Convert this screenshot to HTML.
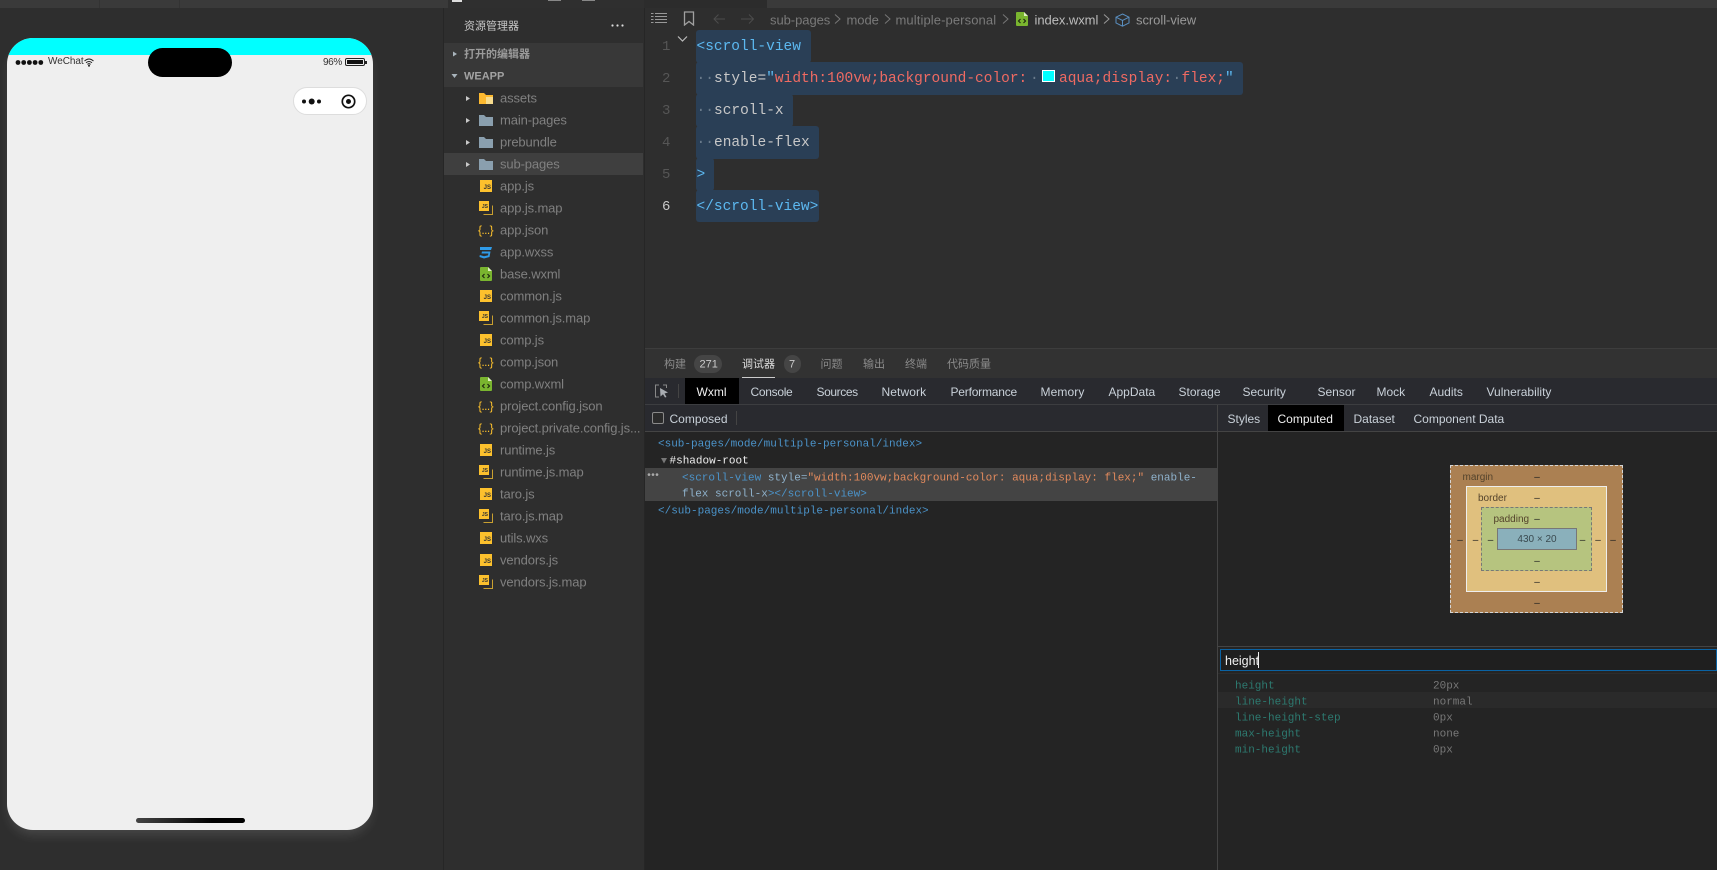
<!DOCTYPE html>
<html lang="zh"><head><meta charset="utf-8"><title>WeChat DevTools</title>
<style>
*{box-sizing:border-box}
html,body{margin:0;padding:0;width:1717px;height:870px;overflow:hidden;background:#2e2e2e;font-family:"Liberation Sans","Noto Sans CJK SC",sans-serif}
.a{position:absolute}
.t{position:absolute;white-space:pre;transform:translateY(-50%);line-height:1}
.m{font-family:"Liberation Mono","DejaVu Sans Mono",monospace}
.f{font-size:13px;letter-spacing:-.12px;color:#808080}
.cd{font-size:14.5px;color:#c8c8c8}
.ln{font-size:14px;color:#565656}
.tab{font-size:12px;color:#c9d1d9}
.cn{font-size:11px;color:#8b8b8b}
.bc{font-size:13px;letter-spacing:-.05px;color:#7a7a7a}
.tr{font-size:11px;color:#4b93c9}
.pn{font-size:11px;color:#2d7a70}
.pv{font-size:11px;color:#787878}
.sel{position:absolute;background:#2a3f56;border-radius:3px}
.js{position:absolute;width:12px;height:12px;background:#fcc12d;color:#333;font:bold 6px/1 "Liberation Sans",sans-serif;text-align:right;padding:5px 1px 0 0}
.mp{position:absolute;width:14px;height:14px}
.mp i{position:absolute;left:0;top:0;width:10px;height:10px;background:#fcc12d;color:#333;font:bold 5px/1 "Liberation Sans",sans-serif;text-align:right;padding:4px 1px 0 0}
.mp b{position:absolute;left:4px;top:4px;width:10px;height:10px;border:1px solid #c9a030;border-left-color:transparent;border-top-color:transparent}
.br{position:absolute;white-space:pre;transform:translateY(-50%);line-height:1;left:478px;font:12px/1 "Liberation Sans",sans-serif;letter-spacing:-.6px;color:#fcc12d}
.b{position:absolute;font-size:10px;color:#222;transform:translate(-50%,-50%);line-height:1}
.bx{font-size:10px;color:#54432c}
</style></head><body>

<!-- top strip -->
<div class="a" style="left:0;top:0;width:1717px;height:8px;background:#3a3a3a"></div>
<div class="a" style="left:99px;top:0;width:1px;height:8px;background:#333"></div>
<div class="a" style="left:179px;top:0;width:1px;height:8px;background:#333"></div>
<div class="a" style="left:448px;top:0;width:196px;height:8px;background:#2f2f2f"></div>
<div class="a" style="left:452px;top:0;width:10px;height:2px;background:#ddd"></div>
<div class="a" style="left:548px;top:0;width:13px;height:1px;background:#888"></div>
<div class="a" style="left:582px;top:0;width:13px;height:1px;background:#888"></div>
<div class="a" style="left:644px;top:0;width:123px;height:8px;background:#2c2c2c"></div>
<div class="a" style="left:443px;top:8px;width:1px;height:862px;background:#262626"></div>
<div class="a" style="left:644px;top:8px;width:1px;height:862px;background:#262626"></div>

<!-- phone -->
<div class="a" style="left:7px;top:38px;width:366px;height:792px;border-radius:26px;background:#efefef;overflow:hidden;box-shadow:0 7px 12px -3px rgba(255,255,255,.14)">
  <div class="a" style="left:0;top:0;width:366px;height:17px;background:#0ff"></div>
</div>
<div class="a" style="left:148px;top:48px;width:84px;height:29px;border-radius:15px;background:#000"></div>
<svg class="a" style="left:15px;top:58px" width="32" height="9"><g fill="#111"><circle cx="3" cy="4.5" r="2.4"/><circle cx="8.7" cy="4.5" r="2.4"/><circle cx="14.4" cy="4.5" r="2.4"/><circle cx="20.1" cy="4.5" r="2.4"/><circle cx="25.8" cy="4.5" r="2.4"/></g></svg>
<span class="t" style="left:48px;top:62px;font-size:10px;letter-spacing:-.05px;color:#333">WeChat</span>
<svg class="a" style="left:84px;top:58px" width="10" height="9" viewBox="0 0 10 9"><path d="M.5 3Q5-1 9.5 3M2 4.8Q5 2.2 8 4.8M3.4 6.4Q5 5 6.6 6.4" fill="none" stroke="#222" stroke-width="1"/><circle cx="5" cy="7.8" r="1" fill="#222"/></svg>
<span class="t" style="left:323px;top:63px;font-size:10px;letter-spacing:-.4px;color:#333">96%</span>
<div class="a" style="left:345px;top:58px;width:20px;height:8px;border:1px solid #222;border-radius:2px;padding:1px"><div style="width:100%;height:100%;background:#111"></div></div>
<div class="a" style="left:365px;top:60.5px;width:1.5px;height:3px;background:#222"></div>
<div class="a" style="left:293px;top:87px;width:74px;height:28px;border-radius:14px;background:#fff;border:1px solid #ddd"></div>
<svg class="a" style="left:300px;top:92px" width="60" height="18"><g fill="#111"><circle cx="4" cy="9.5" r="2"/><circle cx="11.7" cy="9.5" r="3"/><circle cx="19" cy="9.5" r="2"/></g><circle cx="48.5" cy="9.5" r="6.2" fill="none" stroke="#111" stroke-width="1.7"/><circle cx="48.5" cy="9.5" r="2.5" fill="#111"/></svg>
<div class="a" style="left:136px;top:818px;width:109px;height:5px;border-radius:3px;background:linear-gradient(90deg,#444,#000 70%)"></div>

<!-- sidebar -->
<span class="t" style="left:464px;top:27px;font-size:11px;color:#c8c8c8">资源管理器</span>
<svg class="a" style="left:610px;top:23px" width="16" height="6"><g fill="#ddd"><circle cx="2.5" cy="2.5" r="1.1"/><circle cx="7.5" cy="2.5" r="1.1"/><circle cx="12.5" cy="2.5" r="1.1"/></g></svg>
<div class="a" style="left:444px;top:43px;width:199px;height:44px;background:#383838"></div>
<svg class="a" style="left:451px;top:50px" width="8" height="8"><path d="M2 1.5L6 4 2 6.5z" fill="#a9b4bc"/></svg>
<span class="t" style="left:464px;top:55px;font-size:11px;font-weight:700;color:#9b9b9b">打开的编辑器</span>
<svg class="a" style="left:450px;top:72px" width="9" height="8"><path d="M1.5 2H7.5L4.5 6z" fill="#a9b4bc"/></svg>
<span class="t" style="left:464px;top:77px;font-size:11px;font-weight:700;color:#a3a3a3">WEAPP</span>
<div class="a" style="left:444px;top:153px;width:199px;height:22px;background:#3f3f3f"></div>

<svg class="a" style="left:464px;top:92px" width="32" height="80" viewBox="0 0 32 80">
<g fill="#c9c9c9"><path d="M2 4L6 6.5 2 9z"/><path d="M2 26L6 28.5 2 31z"/><path d="M2 48L6 50.5 2 53z"/><path d="M2 70L6 72.5 2 75z"/></g>
<path d="M15 1h5l2 2h7v9H15z" fill="#fdb92f"/><path d="M22 5h7v7h-7z" fill="#f7dc8e"/>
<path d="M15 23h5l2 2h7v9H15z" fill="#8a9fae"/>
<path d="M15 45h5l2 2h7v9H15z" fill="#8a9fae"/>
<path d="M15 67h5l2 2h7v9H15z" fill="#8a9fae"/>
</svg>
<span class="t f" style="left:500px;top:98px">assets</span>
<span class="t f" style="left:500px;top:120px">main-pages</span>
<span class="t f" style="left:500px;top:142px">prebundle</span>
<span class="t f" style="left:500px;top:164px">sub-pages</span>

<span class="js" style="left:480px;top:180px">JS</span><span class="t f" style="left:500px;top:186px">app.js</span>
<span class="mp" style="left:479px;top:201px"><b></b><i>JS</i></span><span class="t f" style="left:500px;top:208px">app.js.map</span>
<span class="br" style="top:230px">{...}</span><span class="t f" style="left:500px;top:230px">app.json</span>
<svg class="a" style="left:479px;top:246px" width="14" height="13" viewBox="0 0 14 13"><path d="M1 1H13L12 4H1zM3 5.5H11.5L10.5 11 5 12.5 .5 11 .8 9 5 10.2 9 9.4 9.4 7.5H2.5z" fill="#2f9be8"/></svg><span class="t f" style="left:500px;top:252px">app.wxss</span>
<svg class="a" style="left:480px;top:267px" width="12" height="14" viewBox="0 0 12 14"><path d="M1 0H8L12 4V13a1 1 0 0 1-1 1H1a1 1 0 0 1-1-1V1a1 1 0 0 1 1-1z" fill="#7ab52f"/><path d="M8 0V4H12z" fill="#dff0c0"/><path d="M4.5 7L2.5 9 4.5 11M7.5 7L9.5 9 7.5 11" fill="none" stroke="#1f2b10" stroke-width="1.2"/></svg><span class="t f" style="left:500px;top:274px">base.wxml</span>
<span class="js" style="left:480px;top:290px">JS</span><span class="t f" style="left:500px;top:296px">common.js</span>
<span class="mp" style="left:479px;top:311px"><b></b><i>JS</i></span><span class="t f" style="left:500px;top:318px">common.js.map</span>
<span class="js" style="left:480px;top:334px">JS</span><span class="t f" style="left:500px;top:340px">comp.js</span>
<span class="br" style="top:362px">{...}</span><span class="t f" style="left:500px;top:362px">comp.json</span>
<svg class="a" style="left:480px;top:377px" width="12" height="14" viewBox="0 0 12 14"><path d="M1 0H8L12 4V13a1 1 0 0 1-1 1H1a1 1 0 0 1-1-1V1a1 1 0 0 1 1-1z" fill="#7ab52f"/><path d="M8 0V4H12z" fill="#dff0c0"/><path d="M4.5 7L2.5 9 4.5 11M7.5 7L9.5 9 7.5 11" fill="none" stroke="#1f2b10" stroke-width="1.2"/></svg><span class="t f" style="left:500px;top:384px">comp.wxml</span>
<span class="br" style="top:406px">{...}</span><span class="t f" style="left:500px;top:406px">project.config.json</span>
<span class="br" style="top:428px">{...}</span><span class="t f" style="left:500px;top:428px">project.private.config.js...</span>
<span class="js" style="left:480px;top:444px">JS</span><span class="t f" style="left:500px;top:450px">runtime.js</span>
<span class="mp" style="left:479px;top:465px"><b></b><i>JS</i></span><span class="t f" style="left:500px;top:472px">runtime.js.map</span>
<span class="js" style="left:480px;top:488px">JS</span><span class="t f" style="left:500px;top:494px">taro.js</span>
<span class="mp" style="left:479px;top:509px"><b></b><i>JS</i></span><span class="t f" style="left:500px;top:516px">taro.js.map</span>
<span class="js" style="left:480px;top:532px">JS</span><span class="t f" style="left:500px;top:538px">utils.wxs</span>
<span class="js" style="left:480px;top:554px">JS</span><span class="t f" style="left:500px;top:560px">vendors.js</span>
<span class="mp" style="left:479px;top:575px"><b></b><i>JS</i></span><span class="t f" style="left:500px;top:582px">vendors.js.map</span>

<!-- breadcrumb -->
<svg class="a" style="left:651px;top:12px" width="16" height="13"><g stroke="#999" stroke-width="1"><path d="M4 1.5H16M4 4.5H16M4 7.5H16M4 10.5H16"/><path d="M0 1.5H2.5M0 4.5H2.5M0 7.5H2.5M0 10.5H2.5"/></g></svg>
<svg class="a" style="left:683px;top:11px" width="12" height="15"><path d="M1.5 1H10.5V14L6 10.5 1.5 14z" fill="none" stroke="#a0a0a0" stroke-width="1.3"/></svg>
<svg class="a" style="left:712px;top:13px" width="44" height="12"><path d="M13 6H2M6.5 1.5L2 6l4.5 4.5M29 6H41M37 1.5L41.5 6l-4.5 4.5" fill="none" stroke="#4c4c4c" stroke-width="1"/></svg>
<span class="t bc" style="left:770px;top:20px">sub-pages</span>
<svg class="a" style="left:834px;top:13px" width="8" height="12"><path d="M1 1.5L6 6 1 10.5" fill="none" stroke="#777" stroke-width="1"/></svg>
<span class="t bc" style="left:846.5px;top:20px">mode</span>
<svg class="a" style="left:884px;top:13px" width="8" height="12"><path d="M1 1.5L6 6 1 10.5" fill="none" stroke="#777" stroke-width="1"/></svg>
<span class="t bc" style="left:895.5px;top:20px;letter-spacing:.1px">multiple-personal</span>
<svg class="a" style="left:1002px;top:13px" width="8" height="12"><path d="M1 1.5L6 6 1 10.5" fill="none" stroke="#777" stroke-width="1"/></svg>
<svg class="a" style="left:1015.5px;top:12px" width="12" height="14" viewBox="0 0 12 14"><path d="M1 0H8L12 4V13a1 1 0 0 1-1 1H1a1 1 0 0 1-1-1V1a1 1 0 0 1 1-1z" fill="#7ab52f"/><path d="M8 0V4H12z" fill="#dff0c0"/><path d="M4.5 7L2.5 9 4.5 11M7.5 7L9.5 9 7.5 11" fill="none" stroke="#1f2b10" stroke-width="1.2"/></svg>
<span class="t bc" style="left:1034.5px;top:20px;color:#bdbdbd">index.wxml</span>
<svg class="a" style="left:1103px;top:13px" width="8" height="12"><path d="M1 1.5L6 6 1 10.5" fill="none" stroke="#999" stroke-width="1"/></svg>
<svg class="a" style="left:1115px;top:12.5px" width="15" height="14" viewBox="0 0 15 14"><path d="M7.5 1L14 4.2V10L7.5 13.2 1 10V4.2zM1 4.2L7.5 7.5 14 4.2M7.5 7.5V13.2" fill="none" stroke="#5a8fc0" stroke-width="1"/></svg>
<span class="t bc" style="left:1136px;top:20px;color:#999">scroll-view</span>

<!-- editor -->
<svg class="a" style="left:677px;top:35px" width="12" height="8"><path d="M1 1.5L5.5 6 10 1.5" fill="none" stroke="#bbb" stroke-width="1.2"/></svg>
<div class="sel" style="left:696px;top:30px;width:115px;height:33px"></div>
<div class="sel" style="left:696px;top:62px;width:547px;height:33px"></div>
<div class="sel" style="left:696px;top:94px;width:97px;height:33px"></div>
<div class="sel" style="left:696px;top:126px;width:123px;height:33px"></div>
<div class="sel" style="left:696px;top:158px;width:18px;height:33px"></div>
<div class="sel" style="left:696px;top:190px;width:123px;height:32px"></div>

<span class="t m ln" style="left:662px;top:47px">1</span>
<span class="t m ln" style="left:662px;top:79px">2</span>
<span class="t m ln" style="left:662px;top:111px">3</span>
<span class="t m ln" style="left:662px;top:143px">4</span>
<span class="t m ln" style="left:662px;top:175px">5</span>
<span class="t m ln" style="left:662px;top:207px;color:#c9c9c9">6</span>

<span class="t m cd" style="left:696.5px;top:47px;color:#5cb8f0">&lt;scroll-view</span>
<span class="t m cd" style="left:696.5px;top:79px;color:#6a7b8c">··</span>
<span class="t m cd" style="left:714px;top:79px">style=<span style="color:#5cb8f0">"</span><span style="color:#ef6a62">width:100vw;background-color:</span></span>
<span class="t m cd" style="left:1030px;top:79px;color:#6a7b8c">·</span>
<div class="a" style="left:1042px;top:70px;width:13px;height:12px;background:#0ff;border:1px solid #fff"></div>
<span class="t m cd" style="left:1059px;top:79px;color:#ef6a62">aqua;display:</span>
<span class="t m cd" style="left:1172.5px;top:79px;color:#6a7b8c">·</span>
<span class="t m cd" style="left:1181.5px;top:79px;color:#ef6a62">flex;<span style="color:#5cb8f0">"</span></span>
<span class="t m cd" style="left:696.5px;top:111px;color:#6a7b8c">··</span>
<span class="t m cd" style="left:714px;top:111px">scroll-x</span>
<span class="t m cd" style="left:696.5px;top:143px;color:#6a7b8c">··</span>
<span class="t m cd" style="left:714px;top:143px">enable-flex</span>
<span class="t m cd" style="left:696.5px;top:175px;color:#5cb8f0">&gt;</span>
<span class="t m cd" style="left:696.5px;top:207px;color:#5cb8f0">&lt;/scroll-view&gt;</span>

<!-- bottom tabs -->
<div class="a" style="left:645px;top:348px;width:1072px;height:30px;background:#323232;border-top:1px solid #3d3d3d"></div>
<div class="a" style="left:645px;top:378px;width:1072px;height:54px;background:#292a2f"></div>
<div class="a" style="left:645px;top:404px;width:1072px;height:1px;background:#3c3d40"></div>
<div class="a" style="left:645px;top:431px;width:1072px;height:1px;background:#444"></div>
<div class="a" style="left:645px;top:432px;width:1072px;height:438px;background:#242424"></div>

<span class="t cn" style="left:664px;top:364.5px">构建</span>
<div class="a" style="left:694px;top:355px;width:28px;height:18px;border-radius:9px;background:#454545"></div>
<span class="t" style="left:699.5px;top:364.5px;font-size:11px;color:#ccc">271</span>
<span class="t cn" style="left:742px;top:364.5px;color:#ddd">调试器</span>
<div class="a" style="left:742px;top:377px;width:33px;height:1px;background:#ccc"></div>
<div class="a" style="left:783.5px;top:355px;width:17px;height:18px;border-radius:8.5px;background:#454545"></div>
<span class="t" style="left:789px;top:364.5px;font-size:11px;color:#ccc">7</span>
<span class="t cn" style="left:820.5px;top:364.5px">问题</span>
<span class="t cn" style="left:863px;top:364.5px">输出</span>
<span class="t cn" style="left:905px;top:364.5px">终端</span>
<span class="t cn" style="left:947px;top:364.5px">代码质量</span>

<svg class="a" style="left:654px;top:384px" width="15" height="14"><path d="M5 1H1.5V13H5M9 1H12.5V4" fill="none" stroke="#888" stroke-width="1"/><path d="M6 4L14 8.5 10.5 9.5 12.5 13 11 13.5 9 10.2 6.5 12.5z" fill="#a9adb2"/></svg>
<div class="a" style="left:678px;top:384px;width:1px;height:14px;background:#444"></div>
<div class="a" style="left:685px;top:378px;width:54px;height:26px;background:#000"></div>
<span class="t tab" style="left:696.5px;top:392px;color:#f0f0f0">Wxml</span>
<span class="t tab" style="left:750.5px;top:392px;letter-spacing:-.3px">Console</span>
<span class="t tab" style="left:816.5px;top:392px;letter-spacing:-.4px">Sources</span>
<span class="t tab" style="left:881.5px;top:392px;letter-spacing:.1px">Network</span>
<span class="t tab" style="left:950.5px;top:392px;letter-spacing:-.2px">Performance</span>
<span class="t tab" style="left:1040.5px;top:392px;letter-spacing:.1px">Memory</span>
<span class="t tab" style="left:1108.5px;top:392px">AppData</span>
<span class="t tab" style="left:1178.5px;top:392px">Storage</span>
<span class="t tab" style="left:1242.5px;top:392px">Security</span>
<span class="t tab" style="left:1317.5px;top:392px">Sensor</span>
<span class="t tab" style="left:1376.5px;top:392px">Mock</span>
<span class="t tab" style="left:1429.5px;top:392px">Audits</span>
<span class="t tab" style="left:1486.5px;top:392px">Vulnerability</span>

<div class="a" style="left:652px;top:412px;width:12px;height:12px;border:1px solid #8a8a8a;border-radius:2px;background:#2b2b2b"></div>
<span class="t tab" style="left:669.5px;top:419px">Composed</span>
<div class="a" style="left:736px;top:411px;width:1px;height:14px;background:#444"></div>

<div class="a" style="left:1217px;top:405px;width:1px;height:465px;background:#444"></div>
<span class="t tab" style="left:1227.5px;top:419px">Styles</span>
<div class="a" style="left:1268px;top:405px;width:76px;height:26px;background:#000"></div>
<span class="t tab" style="left:1277.5px;top:419px;color:#f0f0f0">Computed</span>
<span class="t tab" style="left:1353.5px;top:419px">Dataset</span>
<span class="t tab" style="left:1413.5px;top:419px">Component Data</span>

<!-- wxml tree -->
<div class="a" style="left:645px;top:468px;width:572px;height:33px;background:#444"></div>
<span class="t m tr" style="left:658px;top:444.5px">&lt;sub-pages/mode/multiple-personal/index&gt;</span>
<svg class="a" style="left:660px;top:457px" width="8" height="8"><path d="M1 1H7L4 6.5z" fill="#777"/></svg>
<span class="t m tr" style="left:669.5px;top:461.5px;color:#eee">#shadow-root</span>
<span class="t m" style="left:646px;top:476.5px;font-size:10px;letter-spacing:-2px;color:#aaa">•••</span>
<span class="t m tr" style="left:682px;top:478.5px;color:#4b93c9">&lt;scroll-view <span style="color:#8fb2cc">style=</span><span style="color:#e28a5d">"width:100vw;background-color: aqua;display: flex;"</span> <span style="color:#8fb2cc">enable-</span></span>
<span class="t m tr" style="left:682px;top:494.5px;color:#4b93c9"><span style="color:#8fb2cc">flex scroll-x</span>&gt;&lt;/scroll-view&gt;</span>
<span class="t m tr" style="left:658px;top:512px">&lt;/sub-pages/mode/multiple-personal/index&gt;</span>

<!-- box model -->
<div class="a" style="left:1450px;top:465px;width:173px;height:148px;background:#ab8052;border:1px dashed #d5d5d5"></div>
<div class="a" style="left:1466px;top:486px;width:141px;height:106px;background:#e0c07e;border:1px solid #eee"></div>
<div class="a" style="left:1481px;top:507px;width:111px;height:64px;background:#b6c47f;border:1px dashed #777"></div>
<div class="a" style="left:1497px;top:528px;width:80px;height:22px;background:#8ab0bb;border:1px solid #777"></div>
<span class="t bx" style="left:1462.5px;top:478px">margin</span>
<span class="t bx" style="left:1478px;top:499px">border</span>
<span class="t bx" style="left:1493.5px;top:520px">padding</span>
<span class="b" style="left:1537px;top:478px">–</span>
<span class="b" style="left:1537px;top:499px">–</span>
<span class="b" style="left:1537px;top:520px">–</span>
<span class="b" style="left:1537px;top:540px;color:#3a4a50">430 × 20</span>
<span class="b" style="left:1537px;top:562px">–</span>
<span class="b" style="left:1537px;top:583px">–</span>
<span class="b" style="left:1537px;top:604px">–</span>
<span class="b" style="left:1460px;top:541px">–</span>
<span class="b" style="left:1475.5px;top:541px">–</span>
<span class="b" style="left:1490.5px;top:541px">–</span>
<span class="b" style="left:1582.5px;top:541px">–</span>
<span class="b" style="left:1598px;top:541px">–</span>
<span class="b" style="left:1613px;top:541px">–</span>

<!-- computed filter -->
<div class="a" style="left:1218px;top:646px;width:499px;height:1px;background:#444"></div>
<div class="a" style="left:1220px;top:649px;width:497px;height:22px;border:1px solid #0a62a3;background:#1f1f1f"></div>
<span class="t" style="left:1225px;top:660.5px;font-size:12.5px;color:#f2f2f2">height</span>
<div class="a" style="left:1258px;top:652px;width:1px;height:16px;background:#eee"></div>
<div class="a" style="left:1218px;top:673px;width:499px;height:1px;background:#2c2c2c"></div>
<div class="a" style="left:1218px;top:692px;width:499px;height:16px;background:#2a2a2a"></div>
<span class="t m pn" style="left:1235px;top:686.5px">height</span><span class="t m pv" style="left:1433px;top:686.5px">20px</span>
<span class="t m pn" style="left:1235px;top:702.5px">line-height</span><span class="t m pv" style="left:1433px;top:702.5px">normal</span>
<span class="t m pn" style="left:1235px;top:718.5px">line-height-step</span><span class="t m pv" style="left:1433px;top:718.5px">0px</span>
<span class="t m pn" style="left:1235px;top:734.5px">max-height</span><span class="t m pv" style="left:1433px;top:734.5px">none</span>
<span class="t m pn" style="left:1235px;top:750.5px">min-height</span><span class="t m pv" style="left:1433px;top:750.5px">0px</span>

</body></html>
